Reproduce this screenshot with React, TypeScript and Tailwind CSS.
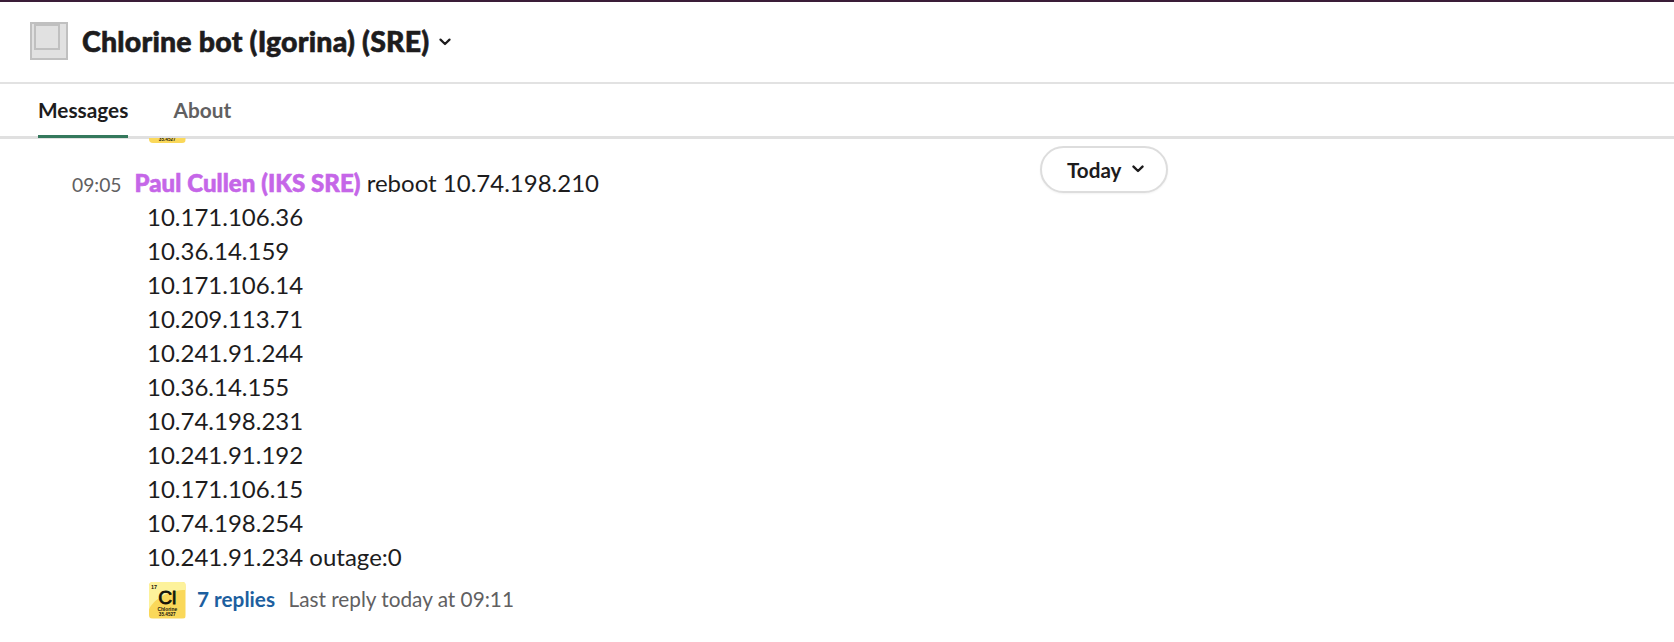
const hosts = [
  "10.171.106.36",
  "10.36.14.159",
  "10.171.106.14",
  "10.209.113.71",
  "10.241.91.244",
  "10.36.14.155",
  "10.74.198.231",
  "10.241.91.192",
  "10.171.106.15",
  "10.74.198.254",
  "10.241.91.234 outage:0",
];

function Chevron({ className, width }: { className: string; width: number }) {
  return (
    <svg viewBox="0 0 12 8" fill="none" stroke="currentColor" strokeWidth={width} strokeLinecap="round" strokeLinejoin="round" className={className}>
      <path d="M1.5 1.6 6 6 10.5 1.6" />
    </svg>
  );
}

function ChlorineAvatar() {
  return (
    <svg viewBox="0 0 36 36" className="block size-[36.5px] shrink-0 rounded-[4px]" fontFamily="Liberation Sans, sans-serif" fill="#15130a">
      <rect width="36" height="36" fill="#fad85a" />
      <path d="M0 0H36V8C22 8 6 15 0 27Z" fill="#fdf29b" />
      <text x="2" y="7" fontSize="5.4" fontWeight="700">17</text>
      <text x="9" y="21.8" fontSize="19" stroke="#15130a" strokeWidth="0.8">Cl</text>
      <text x="18" y="28.2" fontSize="4.8" fontWeight="700" textAnchor="middle">Chlorine</text>
      <text x="18" y="33.8" fontSize="4.6" fontWeight="700" textAnchor="middle">35.4527</text>
    </svg>
  );
}

export default function App() {
  return (
    <div className="flex h-[642px] w-full flex-col overflow-hidden bg-white font-['Lato',sans-serif] text-[#1d1c1d]">
      <div className="h-0.5 shrink-0 bg-[#3a1d38]" />
      <header className="flex h-[82px] shrink-0 items-start border-b-2 border-[#e2e2e2] pt-5 pl-[30px]">
        <div className="size-[38px] border-2 border-[#c0c0c0] bg-[#e1e1e1] pl-0.5">
          <div className="size-[26px] border-2 border-[#c0c0c0]" />
        </div>
        <h1 className="ml-3.5 text-[28.5px] leading-[38px] font-black tracking-[0.2px] whitespace-nowrap [-webkit-text-stroke:0.6px_#1d1c1d]">Chlorine bot (Igorina) (SRE)</h1>
        <Chevron className="mt-[15.5px] ml-2.5 h-2 w-3" width={2.2} />
      </header>
      <nav className="flex h-[52px] shrink-0 pl-[38px] text-[20.8px] leading-[52px] font-bold">
        <div className="relative w-[90px] text-center">
          Messages
          <div className="absolute -bottom-0.5 left-0 h-[3px] w-[90px] bg-[#34785c]" />
        </div>
        <div className="ml-[45.5px] text-[#616061]">About</div>
      </nav>
      <div className="h-[3px] shrink-0 bg-[#e0e0e0]" />
      <main className="relative flex-1 pl-[72px]">
        <div className="relative -mt-px ml-[77px] flex h-[5px] items-end overflow-hidden">
          <ChlorineAvatar />
        </div>
        <div className="mt-[23px] flex h-[34px] items-baseline leading-[34px] whitespace-nowrap">
          <span className="w-[62.5px] text-[19.3px] text-[#616061]">09:05</span>
          <p className="text-[24px]">
            <span className="font-black tracking-[0.06px] text-[#c566e8] [-webkit-text-stroke:0.6px_#c566e8]">Paul Cullen (IKS SRE)</span> reboot 10.74.198.210
          </p>
        </div>
        <div className="pl-[75px] text-[24px] leading-[34px]">
          {hosts.map((host) => (
            <p key={host}>{host}</p>
          ))}
        </div>
        <div className="mt-2 flex items-start pl-[77px] text-[20.75px] leading-[34px]">
          <ChlorineAvatar />
          <span className="ml-[11.5px] font-bold text-[#1d5f9f]">7 replies</span>
          <span className="ml-[13.5px] text-[#616061]">Last reply today at 09:11</span>
        </div>
        <button className="absolute top-[7px] left-[1040px] flex h-[47px] w-[128px] items-center rounded-full border-2 border-[#dddddd] bg-white pt-px pl-[25px] text-[20.6px] font-bold shadow-[0_1px_2px_rgba(0,0,0,0.05)]">
          Today
          <Chevron className="-mt-0.5 ml-[11px] h-2 w-3" width={2.4} />
        </button>
      </main>
    </div>
  );
}
